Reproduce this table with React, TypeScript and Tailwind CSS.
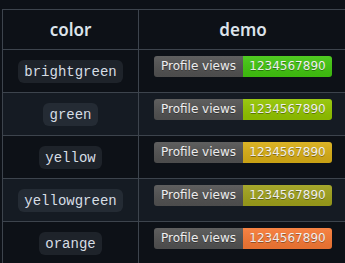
const rows = [
  { name: 'brightgreen', color: 'bg-[#44cc11]' },
  { name: 'green', color: 'bg-[#97ca00]' },
  { name: 'yellow', color: 'bg-[#dfb317]' },
  { name: 'yellowgreen', color: 'bg-[#a4a61d]' },
  { name: 'orange', color: 'bg-[#fe7d37]' },
];

function Badge({ color }: { color: string }) {
  return (
    <div className="relative flex h-[21px] w-[178px] overflow-hidden rounded-[3px] text-[12px] leading-[21px] text-white [font-family:'DejaVu_Sans',Verdana,sans-serif] [text-shadow:0_1px_0_rgba(1,1,1,0.35)]">
      <div className="flex w-[89px] items-center justify-center bg-[#555555]">Profile views</div>
      <div className={`flex w-[89px] items-center justify-center ${color}`}>1234567890</div>
      <div className="pointer-events-none absolute inset-0 bg-gradient-to-b from-[rgba(187,187,187,0.1)] to-[rgba(0,0,0,0.1)]" />
    </div>
  );
}

export default function App() {
  return (
    <div className="min-h-[263px] bg-[#0d1117] pl-[2px] pt-[9px] text-[#e6edf3] [font-family:'Noto_Sans',sans-serif]">
      <div className="w-[346px] border-l border-t border-r border-[#3d444d]">
        <div className="grid h-[40px] grid-cols-[136px_1fr] border-b border-[#3d444d] text-[17px] font-semibold text-[#dce3ea]">
          <div className="flex items-center justify-center border-r border-[#3d444d]">color</div>
          <div className="flex items-center justify-center">demo</div>
        </div>
        {rows.map((row, i) => (
          <div
            key={row.name}
            className={`grid h-[43px] grid-cols-[136px_1fr] border-b border-[#3d444d] ${
              i % 2 === 1 ? 'bg-[#151b23]' : 'bg-[#0d1117]'
            }`}
          >
            <div className="flex justify-center border-r border-[#3d444d] pt-[10px]">
              <span className="h-[23px] rounded-[6px] bg-[rgba(101,108,118,0.2)] px-[6.5px] text-[14px] leading-[24px] text-[#d6dde4] [font-family:'Liberation_Mono',monospace]">
                {row.name}
              </span>
            </div>
            <div className="flex justify-center pt-[6px]">
              <Badge color={row.color} />
            </div>
          </div>
        ))}
      </div>
    </div>
  );
}
